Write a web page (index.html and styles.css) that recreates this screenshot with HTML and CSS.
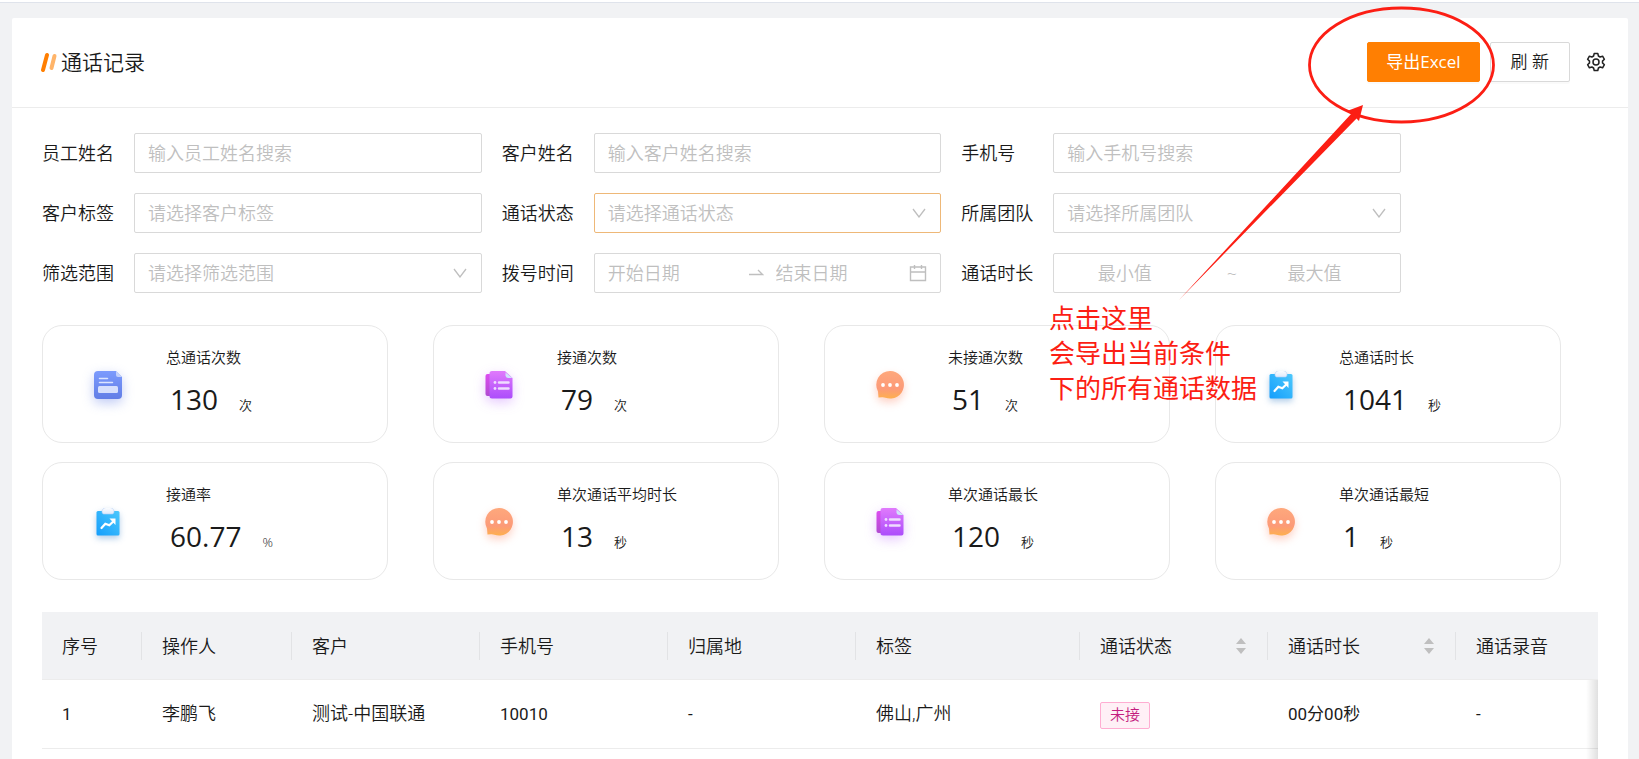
FILE: index.html
```html
<!DOCTYPE html>
<html lang="zh-CN">
<head>
    <meta charset="UTF-8">
    <meta name="viewport" content="width=device-width, initial-scale=1.0">
    <title>通话记录</title>
    <link rel="stylesheet" href="styles.css">
</head>
<body>
    <!-- Shared icons -->
    <svg class="icon-defs" width="0" height="0" aria-hidden="true">
        <defs>
            <linearGradient id="gBlue" x1="0" y1="0" x2="0" y2="1">
                <stop offset="0" stop-color="#7c9bfd"/>
                <stop offset="1" stop-color="#627ee6"/>
            </linearGradient>
            <linearGradient id="gPurple" x1="0" y1="0" x2="0" y2="1">
                <stop offset="0" stop-color="#e07afc"/>
                <stop offset="1" stop-color="#ac4dfb"/>
            </linearGradient>
            <linearGradient id="gPurpleBack" x1="0" y1="0" x2="0" y2="1">
                <stop offset="0" stop-color="#dc4cf0"/>
                <stop offset="1" stop-color="#b04ad0"/>
            </linearGradient>
            <linearGradient id="gOrange" x1="0" y1="0" x2="0" y2="1">
                <stop offset="0" stop-color="#fea87c"/>
                <stop offset="0.65" stop-color="#fc9a78"/>
                <stop offset="1" stop-color="#feb04e"/>
            </linearGradient>
            <linearGradient id="gSky" x1="1" y1="0" x2="0" y2="1">
                <stop offset="0" stop-color="#4cc8fc"/>
                <stop offset="1" stop-color="#149efc"/>
            </linearGradient>
            <linearGradient id="gClip" x1="0" y1="0" x2="0" y2="1">
                <stop offset="0" stop-color="#ffffff"/>
                <stop offset="1" stop-color="#dfe9fb"/>
            </linearGradient>
        </defs>
        <symbol id="icon-doc" viewBox="0 0 28 28">
            <path d="M4 0h18l6 6v18a4 4 0 0 1-4 4H4a4 4 0 0 1-4-4V4a4 4 0 0 1 4-4z" fill="url(#gBlue)"/>
            <path d="M22 0l6 6h-4a2 2 0 0 1-2-2z" fill="#c3d1fb"/>
            <path d="M5.500 7.500h8M5.500 11.500h13" stroke="#dce5ff" stroke-width="1.500" stroke-linecap="round"/>
            <rect x="4" y="15" width="20" height="7" rx="1.500" fill="#d6e0fd"/>
        </symbol>
        <symbol id="icon-list" viewBox="0 0 28 28">
            <rect x="0.500" y="3" width="10" height="22" rx="2" fill="url(#gPurpleBack)"/>
            <path d="M7 0h13l7.500 7v18.500a2 2 0 0 1-2 2H7A2.500 2.500 0 0 1 4.500 25V2.500A2.500 2.500 0 0 1 7 0z" fill="url(#gPurple)"/>
            <path d="M20.500 1.500l7 5.500H23a2.500 2.500 0 0 1-2.500-2.500z" fill="#cfe3fa"/>
            <path d="M14 11.500h9.500M14 17.500h9.500" stroke="#efdcff" stroke-width="2.500" stroke-linecap="round"/>
            <circle cx="10" cy="11.500" r="1.400" fill="#efdcff"/>
            <circle cx="10" cy="17.500" r="1.400" fill="#efdcff"/>
        </symbol>
        <symbol id="icon-chat" viewBox="0 0 28 28">
            <path d="M14 0a13.800 13.800 0 1 1-4.500 26.800Q8 26 6 26.200L2.500 26.500 2 20.500A13.800 13.800 0 0 1 14 0z" fill="url(#gOrange)"/>
            <circle cx="7" cy="14" r="1.900" fill="#fff"/>
            <circle cx="14" cy="14" r="1.900" fill="#fff"/>
            <circle cx="21" cy="14" r="1.900" fill="#fff"/>
        </symbol>
        <symbol id="icon-clip" viewBox="0 0 28 28">
            <rect x="2.500" y="3" width="23" height="24.500" rx="1.500" fill="url(#gSky)"/>
            <path d="M8 3.500C8 1 10.500-.7 14-.7S20 1 20 3.500c0 1.500-.7 2.500-1.700 2.500H9.700C8.700 6 8 5 8 3.500z" fill="url(#gClip)" stroke="#b7d0f6" stroke-width=".6"/>
            <path d="M7.500 20l3.800-4.300 4 1.600 4.500-4.300" fill="none" stroke="#fff" stroke-width="2.200" stroke-linecap="round"/>
            <path d="M15.500 10.500h6v6.500z" fill="#fff"/>
        </symbol>
    </svg>

    <div class="page">
        <div class="card">
            <div class="card-header">
                <h1 class="title">
                    <svg width="17" height="20" viewBox="0 0 17 20" aria-hidden="true">
                        <path d="M7 3L3 18" stroke="#ff7f02" stroke-width="4" stroke-linecap="round"/>
                        <path d="M14.500 4L11.500 16" stroke="#ffb469" stroke-width="4" stroke-linecap="round"/>
                    </svg>
                    通话记录
                </h1>
                <div class="actions">
                    <button type="button" class="btn btn-primary">导出Excel</button>
                    <button type="button" class="btn">刷 新</button>
                    <button type="button" class="btn-icon" aria-label="设置">
                        <svg width="20" height="20" viewBox="0 0 20 20" fill="none" stroke="#222" stroke-width="1.500" stroke-linejoin="round">
                            <path d="M8.200 1.500h3.600l.6 2.500 1.700 1 2.500-.8 1.800 3.100-1.900 1.800v1.800l1.900 1.800-1.800 3.100-2.500-.8-1.700 1-.6 2.500H8.200L7.600 16l-1.700-1-2.500.8-1.800-3.100 1.900-1.800V9.100L1.600 7.300l1.800-3.100 2.500.8 1.700-1z"/>
                            <circle cx="10" cy="10" r="3"/>
                        </svg>
                    </button>
                </div>
            </div>

            <div class="card-body">
                <form class="filters">
                    <div class="field">
                        <label for="staffName">员工姓名</label>
                        <input type="text" id="staffName" class="control" placeholder="输入员工姓名搜索">
                    </div>
                    <div class="field">
                        <label for="customerName">客户姓名</label>
                        <input type="text" id="customerName" class="control" placeholder="输入客户姓名搜索">
                    </div>
                    <div class="field">
                        <label for="phone">手机号</label>
                        <input type="text" id="phone" class="control" placeholder="输入手机号搜索">
                    </div>
                    <div class="field">
                        <label for="customerTag">客户标签</label>
                        <input type="text" id="customerTag" class="control" placeholder="请选择客户标签">
                    </div>
                    <div class="field">
                        <label for="callStatus">通话状态</label>
                        <select id="callStatus" class="control active">
                            <option value="">请选择通话状态</option>
                        </select>
                    </div>
                    <div class="field">
                        <label for="team">所属团队</label>
                        <select id="team" class="control">
                            <option value="">请选择所属团队</option>
                        </select>
                    </div>
                    <div class="field">
                        <label for="scope">筛选范围</label>
                        <select id="scope" class="control">
                            <option value="">请选择筛选范围</option>
                        </select>
                    </div>
                    <div class="field">
                        <label for="startDate">拨号时间</label>
                        <div class="control range">
                            <input type="text" id="startDate" placeholder="开始日期">
                            <svg class="range-arrow" width="16" height="16" viewBox="0 0 16 16" fill="none" stroke="#bfbfbf" stroke-width="1.300" aria-hidden="true">
                                <path d="M1 9.500h13.500L10 5"/>
                            </svg>
                            <input type="text" id="endDate" aria-label="结束日期" placeholder="结束日期">
                            <svg width="18" height="18" viewBox="0 0 18 18" fill="none" stroke="#bfbfbf" stroke-width="1.400" aria-hidden="true">
                                <path d="M1.500 3h15v13.500h-15zM1.500 8h15M5.500 1v4M12.500 1v4"/>
                            </svg>
                        </div>
                    </div>
                    <div class="field">
                        <label for="minDuration">通话时长</label>
                        <div class="control duration">
                            <input type="text" id="minDuration" placeholder="最小值">
                            <span class="tilde">~</span>
                            <input type="text" id="maxDuration" aria-label="最大值" placeholder="最大值">
                        </div>
                    </div>
                </form>

                <div class="stats">
                    <div class="stat">
                        <svg class="stat-icon blue"><use href="#icon-doc"/></svg>
                        <div class="stat-text">
                            <div class="stat-name">总通话次数</div>
                            <div class="stat-value">130<span class="unit">次</span></div>
                        </div>
                    </div>
                    <div class="stat">
                        <svg class="stat-icon purple"><use href="#icon-list"/></svg>
                        <div class="stat-text">
                            <div class="stat-name">接通次数</div>
                            <div class="stat-value">79<span class="unit">次</span></div>
                        </div>
                    </div>
                    <div class="stat">
                        <svg class="stat-icon orange"><use href="#icon-chat"/></svg>
                        <div class="stat-text">
                            <div class="stat-name">未接通次数</div>
                            <div class="stat-value">51<span class="unit">次</span></div>
                        </div>
                    </div>
                    <div class="stat">
                        <svg class="stat-icon sky"><use href="#icon-clip"/></svg>
                        <div class="stat-text">
                            <div class="stat-name">总通话时长</div>
                            <div class="stat-value">1041<span class="unit">秒</span></div>
                        </div>
                    </div>
                    <div class="stat">
                        <svg class="stat-icon sky"><use href="#icon-clip"/></svg>
                        <div class="stat-text">
                            <div class="stat-name">接通率</div>
                            <div class="stat-value">60.77<span class="unit">%</span></div>
                        </div>
                    </div>
                    <div class="stat">
                        <svg class="stat-icon orange"><use href="#icon-chat"/></svg>
                        <div class="stat-text">
                            <div class="stat-name">单次通话平均时长</div>
                            <div class="stat-value">13<span class="unit">秒</span></div>
                        </div>
                    </div>
                    <div class="stat">
                        <svg class="stat-icon purple"><use href="#icon-list"/></svg>
                        <div class="stat-text">
                            <div class="stat-name">单次通话最长</div>
                            <div class="stat-value">120<span class="unit">秒</span></div>
                        </div>
                    </div>
                    <div class="stat">
                        <svg class="stat-icon orange"><use href="#icon-chat"/></svg>
                        <div class="stat-text">
                            <div class="stat-name">单次通话最短</div>
                            <div class="stat-value">1<span class="unit">秒</span></div>
                        </div>
                    </div>
                </div>

                <div class="table-wrap">
                    <table class="records">
                        <colgroup>
                            <col class="col-index">
                            <col class="col-operator">
                            <col class="col-base">
                            <col class="col-base">
                            <col class="col-base">
                            <col class="col-tag">
                            <col class="col-base">
                            <col class="col-base">
                            <col>
                        </colgroup>
                        <thead>
                            <tr>
                                <th><div class="th">序号</div></th>
                                <th><div class="th">操作人</div></th>
                                <th><div class="th">客户</div></th>
                                <th><div class="th">手机号</div></th>
                                <th><div class="th">归属地</div></th>
                                <th><div class="th">标签</div></th>
                                <th>
                                    <div class="th">通话状态
                                        <svg width="12" height="16" viewBox="0 0 12 16" fill="#bfbfbf" aria-hidden="true"><path d="M6 0l5 6H1zM6 16l5-6H1z"/></svg>
                                    </div>
                                </th>
                                <th>
                                    <div class="th">通话时长
                                        <svg width="12" height="16" viewBox="0 0 12 16" fill="#bfbfbf" aria-hidden="true"><path d="M6 0l5 6H1zM6 16l5-6H1z"/></svg>
                                    </div>
                                </th>
                                <th><div class="th">通话录音</div></th>
                            </tr>
                        </thead>
                        <tbody>
                            <tr>
                                <td class="num">1</td>
                                <td>李鹏飞</td>
                                <td>测试-中国联通</td>
                                <td class="num">10010</td>
                                <td class="num">-</td>
                                <td>佛山,广州</td>
                                <td><span class="tag">未接</span></td>
                                <td class="num">00分00秒</td>
                                <td class="num">-</td>
                            </tr>
                        </tbody>
                    </table>
                </div>
            </div>
        </div>

        <!-- Hint drawn over the page -->
        <div class="hint">
            <svg width="450" height="300" viewBox="0 0 450 300" aria-hidden="true">
                <ellipse cx="352.500" cy="65" rx="92" ry="57" fill="none" stroke="#fc1e14" stroke-width="2.800"/>
                <path d="M130 300L302.500 113.600 298 111l16-6-4 16-2.500-2.600z" fill="#fc1e14"/>
            </svg>
            <p class="hint-text">点击这里<br>会导出当前条件<br>下的所有通话数据</p>
        </div>
    </div>
</body>
</html>
```
FILE: styles.css
```css
* {
    box-sizing: border-box;
}
body {
    margin: 0;
    min-height: 100vh;
    background-color: #f1f2f4;
    border-top: 2px solid #fff;
    color: #1a1a1a;
    font-family: "Open Sans", "Noto Sans CJK SC", sans-serif;
    font-size: 18px;
    font-weight: 350;
    line-height: 28px;
}
input, select, button {
    font: inherit;
    color: inherit;
}
.icon-defs {
    position: absolute;
}
.page {
    position: relative;
    border-top: 1px solid #dfe3eb;
    padding: 15px 11px 0 12px;
    height: calc(100vh - 2px);
    overflow: hidden;
}
.card {
    background: #fff;
    border-radius: 2px;
    min-height: 100vh;
}

/* Header */
.card-header {
    display: flex;
    align-items: center;
    justify-content: space-between;
    padding: 24px 22px 25px 28px;
    border-bottom: 1px solid #ececec;
}
.title {
    display: flex;
    align-items: center;
    gap: 4px;
    margin: 0;
    font-size: 21px;
    font-weight: 350;
}
.actions {
    display: flex;
    align-items: center;
    gap: 10px;
}
.btn {
    height: 40px;
    padding: 0 20px;
    background: #fff;
    border: 1px solid #d9d9d9;
    border-radius: 2px;
    box-shadow: 0 2px 0 rgba(0, 0, 0, 0.02);
    font-size: 17px;
    cursor: pointer;
}
.btn-primary {
    padding: 0 18px;
    background: #ff7f02;
    border-color: #ff7f02;
    color: #fff;
    font-weight: 400;
}
.btn-icon {
    display: flex;
    margin-left: 6px;
    padding: 0;
    border: none;
    background: none;
    cursor: pointer;
}

/* Filters */
.card-body {
    padding: 25px 30px 0;
}
.filters {
    display: grid;
    grid-template-columns: repeat(3, 1fr);
    gap: 20px;
    padding-right: 197px;
}
.field {
    display: flex;
    align-items: center;
}
.field label {
    flex: 0 0 92px;
}
.control {
    flex: 1;
    min-width: 0;
    height: 40px;
    padding: 0 13px;
    background: #fff;
    border: 1px solid #d9d9d9;
    border-radius: 2px;
    outline: none;
}
.control.active {
    border-color: #eeb878;
}
select.control {
    appearance: none;
    color: #bfbfbf;
    background: #fff url("data:image/svg+xml,%3Csvg xmlns='http://www.w3.org/2000/svg' width='14' height='10' fill='none' stroke='%23bfbfbf' stroke-width='1.300'%3E%3Cpath d='M1 1l6 8 6-8'/%3E%3C/svg%3E") no-repeat right 14px center;
}
::placeholder {
    color: #bfbfbf;
    opacity: 1;
}
.range {
    display: flex;
    align-items: center;
    gap: 12px;
}
.range input, .duration input {
    flex: 1;
    width: 0;
    padding: 0;
    border: none;
    outline: none;
    background: none;
}
.range-arrow {
    margin-left: 6px;
}
.duration {
    display: grid;
    grid-template-columns: 40% 70px 1fr;
    align-items: center;
    padding: 0 24px 0 0;
}
.duration input {
    width: 100%;
    text-align: center;
}
.duration input:first-child {
    padding-left: 12px;
}
.tilde {
    padding-right: 16px;
    color: #bfbfbf;
    text-align: right;
}

/* Statistics */
.stats {
    display: grid;
    grid-template-columns: repeat(4, 1fr);
    gap: 19px 45px;
    margin-top: 32px;
    padding-right: 37px;
}
.stat {
    display: flex;
    align-items: center;
    gap: 44px;
    height: 118px;
    padding: 2px 0 0 51px;
    border: 1px solid #e8e8e8;
    border-radius: 20px;
}
.stat-icon {
    width: 28px;
    height: 28px;
    overflow: visible;
}
.blue {
    filter: drop-shadow(0 4px 6px rgba(98, 126, 230, 0.4));
}
.purple {
    filter: drop-shadow(0 4px 6px rgba(172, 77, 251, 0.3));
}
.orange {
    filter: drop-shadow(0 4px 4px rgba(252, 140, 110, 0.4));
}
.sky {
    filter: drop-shadow(0 3px 3px rgba(60, 130, 200, 0.4));
}
.stat-text {
    padding-top: 4px;
}
.stat-name {
    font-size: 15px;
    line-height: 24px;
}
.stat-value {
    margin-top: 6px;
    padding-left: 4px;
    font-size: 28px;
    font-weight: 400;
    line-height: 48px;
}
.unit {
    margin-left: 21px;
    font-size: 13px;
    font-weight: 350;
}

/* Table */
.table-wrap {
    position: relative;
    margin-top: 32px;
}
.table-wrap::after {
    content: "";
    position: absolute;
    top: 68px;
    right: 0;
    width: 12px;
    height: 100%;
    background: linear-gradient(to left, rgba(0, 0, 0, 0.12), rgba(0, 0, 0, 0));
}
.records {
    width: 100%;
    table-layout: fixed;
    border-collapse: separate;
    border-spacing: 0;
}
.col-index {
    width: 100px;
}
.col-operator {
    width: 150px;
}
.col-base {
    width: 188px;
}
.col-tag {
    width: 224px;
}
.records th {
    height: 68px;
    padding: 0;
    background: #f1f2f4;
    border-bottom: 1px solid #ececec;
    font-weight: 350;
    text-align: left;
}
.th {
    display: flex;
    align-items: center;
    justify-content: space-between;
    padding: 0 20px;
    border-right: 1px solid #e2e3e5;
}
.records th:last-child .th {
    border-right: none;
}
.records td {
    height: 69px;
    padding: 0 20px;
    border-bottom: 1px solid #ececec;
    font-family: Roboto, "Noto Sans CJK SC", sans-serif;
}
.records .num {
    font-size: 17px;
    font-weight: 400;
}
.tag {
    display: inline-block;
    padding: 0 9px;
    background: #fff0f6;
    border: 1px solid #ffadd2;
    border-radius: 2px;
    color: #c41d7f;
    font-size: 15px;
    line-height: 25px;
}

/* Hint */
.hint {
    position: absolute;
    top: -3px;
    right: 140px;
    width: 450px;
    color: #fc1e14;
    pointer-events: none;
}
.hint svg {
    display: block;
}
.hint-text {
    margin: 1px 0 0;
    font-size: 26px;
    font-weight: 400;
    line-height: 35px;
}
```
